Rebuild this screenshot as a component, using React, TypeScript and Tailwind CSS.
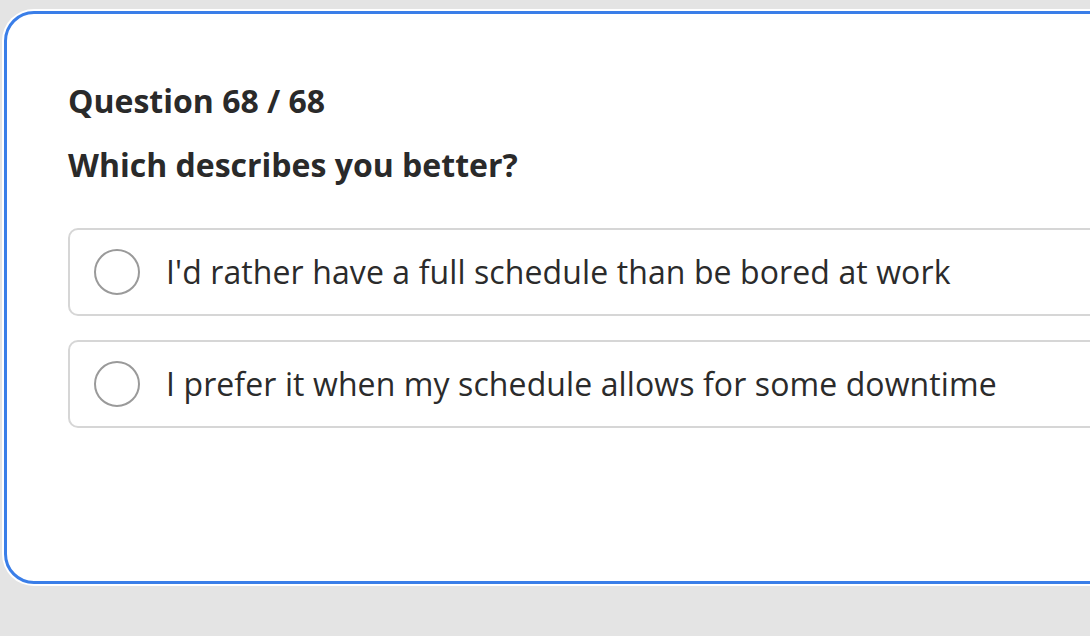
import React from 'react';

const options = [
  "I'd rather have a full schedule than be bored at work",
  'I prefer it when my schedule allows for some downtime',
];

const App: React.FC = () => {
  return (
    <div className="h-[636px] w-[1090px] overflow-hidden bg-[#e4e4e4] pt-[11px] pl-[4px] font-['Open_Sans',sans-serif]">
      <div className="w-[1200px] h-[573px] rounded-[30px] border-[3px] border-[#3a7ee8] bg-white ring-2 ring-white pl-[61px] pt-[69px]">
        <h1 className="text-[32px] leading-[36px] font-bold text-[#2a2a2a]">Question 68 / 68</h1>
        <h2 className="mt-[28px] text-[32px] leading-[36px] font-bold text-[#2a2a2a]">Which describes you better?</h2>
        <div className="mt-[45px] flex flex-col gap-[24px]">
          {options.map((o) => (
            <label
              key={o}
              className="flex h-[88px] items-center rounded-[10px] border-2 border-[#d6d6d6] pl-[24px] cursor-pointer"
            >
              <span className="h-[46px] w-[46px] shrink-0 rounded-full border-2 border-[#9a9a9a]" />
              <span className="ml-[26px] text-[32px] leading-[40px] tracking-[0.1px] text-[#2b2b2b]">{o}</span>
            </label>
          ))}
        </div>
      </div>
    </div>
  );
};

export default App;
